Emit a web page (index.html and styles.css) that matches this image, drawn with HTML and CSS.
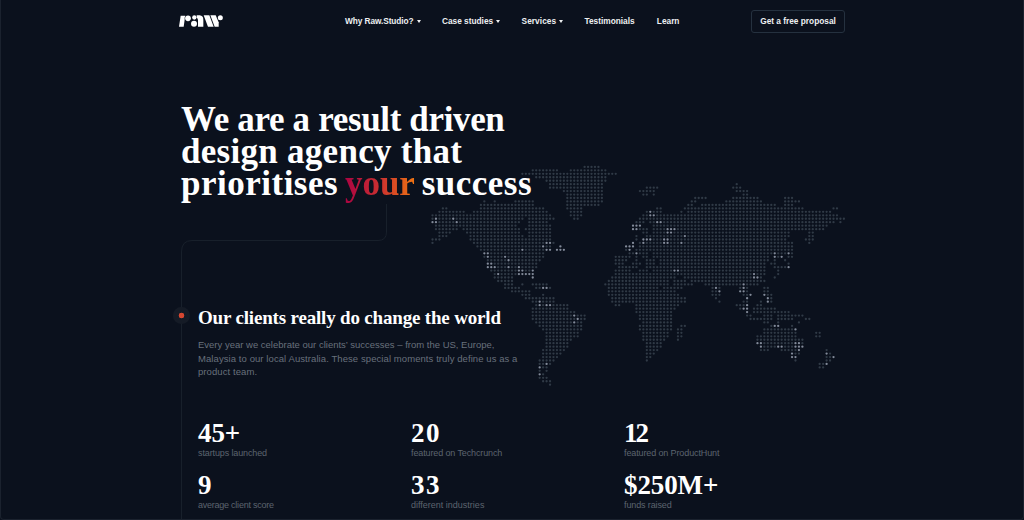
FILE: index.html
```html
<!DOCTYPE html>
<html lang="en">
<head>
<meta charset="utf-8">
<title>Raw.Studio</title>
<link rel="stylesheet" href="styles.css">
</head>
<body>
<div class="page">
  <header class="header">
    <svg class="logo" viewBox="0 0 132 36" role="img" aria-label="raw">
      <path d="M5 2 H19 Q16 7 17 14 L14 35 H0 Z"/><circle cx="27" cy="10" r="8.500"/>
      <circle cx="46" cy="7.500" r="6.500"/><circle cx="45" cy="26.500" r="9"/>
      <path d="M53 1 H62 Q73 2 73 14 V35 H57 V16 Q57 10 53 8 Z"/>
      <path d="M74 1 H91 L104 35 H87 Z"/><path d="M94 1 H110 L119 22 V35 H107 Z"/><circle cx="124" cy="8" r="7.500"/>
    </svg>
    <nav class="nav">
      <a class="item why">Why Raw.Studio?<i class="caret"></i></a>
      <a class="item cases">Case studies<i class="caret"></i></a>
      <a class="item services">Services<i class="caret"></i></a>
      <a class="item testimonials">Testimonials</a>
      <a class="item learn">Learn</a>
    </nav>
    <a class="cta">Get a free proposal</a>
  </header>

  <svg class="map" width="420" height="226" viewBox="0 0 420 226" aria-hidden="true"></svg>
  <svg class="track" width="207" height="316" viewBox="0 0 207 316" aria-hidden="true">
    <path d="M206.500 0 V28 Q206.500 36.500 198 36.500 H12 Q1.500 36.500 1.500 48 V316"/>
  </svg>

  <main class="main">
    <h1 class="title">
      <span class="line l1">We are a result driven</span>
      <span class="line l2">design agency that</span>
      <span class="line l3">prioritises <em class="accent">your</em> success</span>
    </h1>
    <section class="clients">
      <span class="marker"></span>
      <h2 class="subtitle">Our clients really do change the world</h2>
      <p class="copy"><span class="line c1">Every year we celebrate our clients’ successes – from the US, Europe,</span><span class="line c2">Malaysia to our local Australia. These special moments truly define us as a</span><span class="line c3">product team.</span></p>
      <div class="stats">
        <div class="stat"><b class="num">45+</b><span class="label">startups launched</span></div>
        <div class="stat"><b class="num wide">20</b><span class="label">featured on Techcrunch</span></div>
        <div class="stat"><b class="num narrow">12</b><span class="label">featured on ProductHunt</span></div>
        <div class="stat"><b class="num">9</b><span class="label tight">average client score</span></div>
        <div class="stat"><b class="num wide">33</b><span class="label loose">different industries</span></div>
        <div class="stat"><b class="num">$250M+</b><span class="label">funds raised</span></div>
      </div>
    </section>
  </main>
</div>
<script src="map.js"></script>
</body>
</html>
```

FILE: map.js
```js
// Land cells of the dotted world map: one string per row, "from-to" column runs.
const rows = [
"44-48","29-36 40-50","26-53","30-50","33-50","34-49 88","34-49 62-65 87-89","38-49 60-64 88-91",
"39-49 61-62 64 90-91","39-49 76-79 87-94 102-104","15 18 24-29 39-49 75-76 85-95 102-106",
"14-29 39-48 74-75 78-99 102-104","3-4 14-32 39-43 65-66 73-107 116-117",
"2-9 12-33 40-43 62-66 72 74-115","0-34 40-43 61-117","0-26 28-35 41-42 60-119",
"0-25 28-33 59-61 63-116 118","1-24 28-34 58-60 64-114","1-7 9-25 27-34 58-62 64-113",
"2-5 10-25 28-34 61-62 64-103 109-110","2-4 11-26 28-34 59 62-103 109-110",
"0-2 11-34 59 61-102 108-110","0 12-31 32-35 58 60-104 109","13-31 32-34 37 56-58 60-104",
"14-32 33-34 36-38 56-57 59-104","15-32 57-62 64-104","15-32 53-57 59 61-62 64-97 99-101 103-104",
"16-31 53-56 59 62-64 66-97 99 102","16-30 53-55 58-60 62-64 66-96 98-99 103",
"16-30 54-59 62-96 99-103","17-29 53-57 60-62 64-96 100","18-29 53-69 70-96 100",
"18-23 29 52-70 73-95 99","19-23 51-68 70-73 75-96","21-23 26 29-33 50-68 70-75 79-94",
"21-25 30-34 51-65 67-72 81-83 89-91 96-97","23-28 51-70 81-83 89-91 96-97",
"26-28 32 51-71 81-83 90-92 96-98","27-35 52-73 82 91 97-98","29-35 52-73 83 90-91 95 97-98",
"30-39 53-54 59-71 88-91 94-95","29-39 59-70 89-91 93-99","29-41 59-69 91 93-103",
"29-44 60-69 91-92 96-98 100-107","29-44 60-69 92-98 100-104 108-109","30-43 61-69 96-97 100 106",
"31-43 60-69 72-73 98-100 104","32-43 60-69 71-72 96-105","33-42 61-68 71-72 96-105 111-112",
"33-42 61-68 71-72 94-105 111-112","33-40 61-67 71 94-107","33-39 62-66 94-107","33-39 62-66 95-107",
"32-38 62-65 95-97 101-106 114","32-37 62-64 104-106 114-115","32-36 62-63 104-105 114-116",
"31-35 62 105 114-115","31-34 112-114","31-33 112-113","31 33","31-32","31-33","32-34","34"
];
// Brighter cells, as row: columns.
const bright = {
13:"63",14:"63 64",15:"1 6",16:"0 1 7 65 66",17:"58 59 60",18:"58 59 68 69 70",19:"68 69",20:"73",
21:"61 62 63 67 68",22:"33 34 58 61 67 68 72",23:"32 37 56 57 58",24:"26 33 34 36 37 38 57",
25:"15 16 59 63 99 103",26:"16 21 99 101",27:"22",28:"16 17",29:"16 17 18 22 25 103",
30:"25 26 29 70 71",31:"19 25 26 27 28 29 93",32:"29 93 94",34:"90",35:"32 33 82 90",
36:"83 89 90",37:"92 96",38:"91 97",39:"31 97",40:"31 33 34 91",41:"90 91",42:"91",43:"41",44:"42",
45:"41",46:"99 100",47:"105",51:"94 95 105 106",52:"95 100 101 105 106 107",53:"106",54:"104 114",
55:"104 105 116",57:"33 114",58:"31",60:"31"
};
const pitch = 3.457, svg = document.querySelector(".map");
rows.forEach((runs, r) => {
  const hot = (bright[r] || "").split(" ").map(String);
  runs.split(" ").forEach(run => {
    const [from, to = from] = run.split("-").map(Number);
    for (let c = from; c <= to; c++) {
      const dot = document.createElementNS("http://www.w3.org/2000/svg", "circle");
      dot.setAttribute("cx", (4.5 + c * pitch).toFixed(2));
      dot.setAttribute("cy", (4.9 + r * pitch).toFixed(2));
      dot.setAttribute("r", 1.15);
      dot.setAttribute("class", hot.includes(String(c)) ? "dot hot" : "dot");
      svg.appendChild(dot);
    }
  });
});
```

FILE: styles.css
```css
* { box-sizing: border-box; }
body { margin: 0; background: #0b111d; }
.page {
  position: relative; width: 1024px; height: 520px; overflow: hidden;
  background: #0b111d; color: #fff; font-family: "Liberation Sans", Arial, sans-serif;
  border: 1px solid #1b222e; border-top: 0; border-radius: 0 0 4px 4px;
}
.header { display: flex; align-items: center; height: 42px; padding: 0 178px; }
.logo { width: 44px; height: 12px; fill: #fff; margin-top: -1px; }
.nav { display: flex; gap: 21.400px; margin-left: 122px; font-size: 8.300px; font-weight: 700; }
.item { display: flex; align-items: center; white-space: nowrap; color: #eef0f2; }
.why { letter-spacing: -0.08px; }
.services { letter-spacing: 0.06px; }
.caret { margin-left: 3px; border: 2.5px solid transparent; border-width: 3px 2.5px 0; border-top-color: #eef0f2; }
.cta {
  display: flex; align-items: center; justify-content: center; width: 94px; height: 23px;
  margin-left: auto; border: 1px solid #25313f; border-radius: 3px;
  font-size: 8.300px; font-weight: 700; white-space: nowrap; color: #eef0f2;
}
.learn { margin-left: 0.8px; }
.map { position: absolute; left: 427px; top: 162px; }
.dot { fill: #303a46; }
.hot { fill: #838b9a; }
.track { position: absolute; left: 179px; top: 204px; fill: none; stroke: #18202b; stroke-width: 1; }
.main { position: relative; padding: 62px 0 0 180px; }
.line { display: block; white-space: nowrap; }
.title { margin: 0; font: 700 35px/32px "Liberation Serif", serif; letter-spacing: -0.35px; }
.l2 { letter-spacing: 0.28px; }
.l3 { letter-spacing: 0.5px; word-spacing: -2.5px; }
.accent {
  font-style: normal; color: transparent; -webkit-background-clip: text; background-clip: text;
  background-image: linear-gradient(90deg, #ab0442 0%, #cb3030 50%, #ee7412 100%);
  letter-spacing: 0;
}
.clients { position: relative; margin: 107px 0 0 17px; }
.marker {
  position: absolute; left: -25px; top: 0; width: 17px; height: 17px; border-radius: 50%;
  background: radial-gradient(circle, #d64731 0 2.6px, #151b26 3.1px);
}
.subtitle { margin: 0; font: 700 19px/22px "Liberation Serif", serif; letter-spacing: -0.18px; white-space: nowrap; }
.copy { margin: 9px 0 0; font-size: 9.500px; line-height: 13.500px; color: #68707c; }
.c2 { letter-spacing: 0.08px; }
.c3 { letter-spacing: 0.08px; }
.stats { display: grid; grid-template-columns: 213px 213px 213px; grid-auto-rows: 52.500px; margin-top: 40px; }
.stat { display: flex; flex-direction: column; }
.num { font: 700 27px/28px "Liberation Serif", serif; letter-spacing: -0.1px; }
.wide { letter-spacing: 1.5px; }
.narrow { letter-spacing: -2px; }
.label { font-size: 9px; line-height: 12px; letter-spacing: -0.12px; color: #5c646f; }
.tight { letter-spacing: -0.24px; }
.loose { letter-spacing: 0; }
```
